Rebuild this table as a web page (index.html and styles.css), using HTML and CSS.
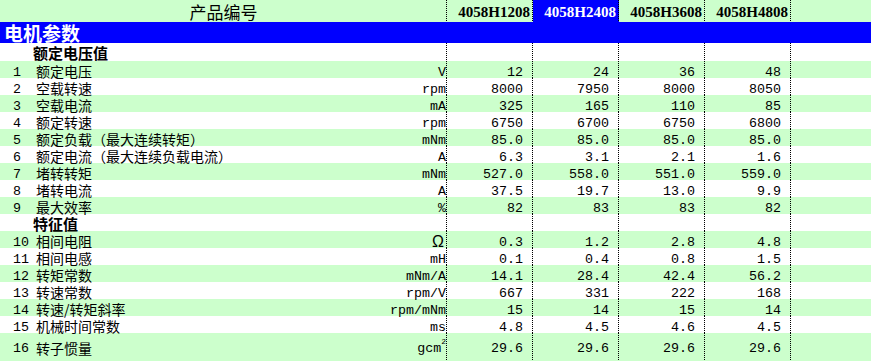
FILE: index.html
```html
<!DOCTYPE html>
<html lang="zh-CN">
<head>
<meta charset="utf-8">
<title>电机参数</title>
<link rel="stylesheet" href="styles.css">
</head>
<body>
<div class="sheet">
  <div class="row hdr">
    <div class="c title ln">产品编号</div>
    <div class="c model ln">4058H1208</div>
    <div class="c model sel ln">4058H2408</div>
    <div class="c model ln">4058H3608</div>
    <div class="c model ln">4058H4808</div>
    <div class="c"></div>
  </div>
  <div class="row sec"><div class="c sect">电机参数</div></div>
  <div class="row sub w">
    <div class="c"></div><div class="c head">额定电压值</div><div class="c ln"></div>
    <div class="c ln"></div><div class="c ln"></div><div class="c ln"></div><div class="c ln"></div><div class="c"></div>
  </div>
  <div class="row g">
    <div class="c num">1</div><div class="c name">额定电压</div><div class="c unit ln">V</div>
    <div class="c val ln">12</div><div class="c val ln">24</div><div class="c val ln">36</div><div class="c val ln">48</div><div class="c"></div>
  </div>
  <div class="row w">
    <div class="c num">2</div><div class="c name">空载转速</div><div class="c unit ln">rpm</div>
    <div class="c val ln">8000</div><div class="c val ln">7950</div><div class="c val ln">8000</div><div class="c val ln">8050</div><div class="c"></div>
  </div>
  <div class="row g">
    <div class="c num">3</div><div class="c name">空载电流</div><div class="c unit ln">mA</div>
    <div class="c val ln">325</div><div class="c val ln">165</div><div class="c val ln">110</div><div class="c val ln">85</div><div class="c"></div>
  </div>
  <div class="row w">
    <div class="c num">4</div><div class="c name">额定转速</div><div class="c unit ln">rpm</div>
    <div class="c val ln">6750</div><div class="c val ln">6700</div><div class="c val ln">6750</div><div class="c val ln">6800</div><div class="c"></div>
  </div>
  <div class="row g">
    <div class="c num">5</div><div class="c name">额定负载（最大连续转矩）</div><div class="c unit ln">mNm</div>
    <div class="c val ln">85.0</div><div class="c val ln">85.0</div><div class="c val ln">85.0</div><div class="c val ln">85.0</div><div class="c"></div>
  </div>
  <div class="row w">
    <div class="c num">6</div><div class="c name">额定电流（最大连续负载电流）</div><div class="c unit ln">A</div>
    <div class="c val ln">6.3</div><div class="c val ln">3.1</div><div class="c val ln">2.1</div><div class="c val ln">1.6</div><div class="c"></div>
  </div>
  <div class="row g">
    <div class="c num">7</div><div class="c name">堵转转矩</div><div class="c unit ln">mNm</div>
    <div class="c val ln">527.0</div><div class="c val ln">558.0</div><div class="c val ln">551.0</div><div class="c val ln">559.0</div><div class="c"></div>
  </div>
  <div class="row w">
    <div class="c num">8</div><div class="c name">堵转电流</div><div class="c unit ln">A</div>
    <div class="c val ln">37.5</div><div class="c val ln">19.7</div><div class="c val ln">13.0</div><div class="c val ln">9.9</div><div class="c"></div>
  </div>
  <div class="row g">
    <div class="c num">9</div><div class="c name">最大效率</div><div class="c unit ln">%</div>
    <div class="c val ln">82</div><div class="c val ln">83</div><div class="c val ln">83</div><div class="c val ln">82</div><div class="c"></div>
  </div>
  <div class="row w">
    <div class="c"></div><div class="c head">特征值</div><div class="c ln"></div>
    <div class="c ln"></div><div class="c ln"></div><div class="c ln"></div><div class="c ln"></div><div class="c"></div>
  </div>
  <div class="row g">
    <div class="c num">10</div><div class="c name">相间电阻</div><div class="c unit ohm ln">Ω</div>
    <div class="c val ln">0.3</div><div class="c val ln">1.2</div><div class="c val ln">2.8</div><div class="c val ln">4.8</div><div class="c"></div>
  </div>
  <div class="row w">
    <div class="c num">11</div><div class="c name">相间电感</div><div class="c unit ln">mH</div>
    <div class="c val ln">0.1</div><div class="c val ln">0.4</div><div class="c val ln">0.8</div><div class="c val ln">1.5</div><div class="c"></div>
  </div>
  <div class="row g">
    <div class="c num">12</div><div class="c name">转矩常数</div><div class="c unit ln">mNm/A</div>
    <div class="c val ln">14.1</div><div class="c val ln">28.4</div><div class="c val ln">42.4</div><div class="c val ln">56.2</div><div class="c"></div>
  </div>
  <div class="row w">
    <div class="c num">13</div><div class="c name">转速常数</div><div class="c unit ln">rpm/V</div>
    <div class="c val ln">667</div><div class="c val ln">331</div><div class="c val ln">222</div><div class="c val ln">168</div><div class="c"></div>
  </div>
  <div class="row g">
    <div class="c num">14</div><div class="c name">转速/转矩斜率</div><div class="c unit ln">rpm/mNm</div>
    <div class="c val ln">15</div><div class="c val ln">14</div><div class="c val ln">15</div><div class="c val ln">14</div><div class="c"></div>
  </div>
  <div class="row w">
    <div class="c num">15</div><div class="c name">机械时间常数</div><div class="c unit ln">ms</div>
    <div class="c val ln">4.8</div><div class="c val ln">4.5</div><div class="c val ln">4.6</div><div class="c val ln">4.5</div><div class="c"></div>
  </div>
  <div class="row tall g">
    <div class="c num">16</div><div class="c name">转子惯量</div><div class="c unit ln"><span>gcm<sup class="sq">2</sup></span></div>
    <div class="c val ln">29.6</div><div class="c val ln">29.6</div><div class="c val ln">29.6</div><div class="c val ln">29.6</div><div class="c"></div>
  </div>
</div>
</body>
</html>
```

FILE: styles.css
```css
html, body {
  margin: 0;
  padding: 0;
  background: #ffffff;
}

.sheet {
  width: 871px;
  color: #000;
}

.row {
  display: grid;
  grid-template-columns: 33px 330px 84px repeat(4, 86px) 1fr;
  grid-template-rows: 17px;
  height: 17px;
}

.row.hdr {
  grid-template-rows: 22px;
  height: 22px;
  background: #ccffcc;
}

.row.sec {
  grid-template-rows: 21px;
  height: 21px;
  background: #0000ff;
}

.row.sub {
  grid-template-rows: 18px;
  height: 18px;
}

.row.tall {
  grid-template-rows: 28px;
  height: 28px;
}

.g { background: #ccffcc; }
.w { background: #ffffff; }

.c {
  box-sizing: border-box;
  display: flex;
  align-items: center;
  min-width: 0;
  white-space: nowrap;
  line-height: 1;
}

.ln {
  background-image: repeating-linear-gradient(to bottom, #000 0, #000 1px, transparent 1px, transparent 2px);
  background-size: 1px 100%;
  background-position: right top;
  background-repeat: no-repeat;
}

.title {
  grid-column: 1 / 4;
  justify-content: center;
  font-family: "Noto Sans CJK SC", sans-serif;
  font-size: 17px;
  padding-top: 1px;
}

.model {
  justify-content: flex-end;
  padding-right: 3px;
  padding-top: 2px;
  font-family: "Liberation Serif", serif;
  font-weight: bold;
  font-size: 15px;
}

.model.sel {
  background-color: #0000ff;
  color: #ffffff;
}

.sect {
  grid-column: 1 / -1;
  padding-left: 4px;
  color: #ffffff;
  font-family: "Noto Sans CJK SC", sans-serif;
  font-weight: bold;
  font-size: 19px;
}

.head {
  padding-left: 0;
  padding-top: 1px;
  font-family: "Noto Sans CJK SC", sans-serif;
  font-weight: bold;
  font-size: 15px;
}

.num {
  padding-left: 13px;
  padding-top: 7px;
  font-family: "Liberation Mono", monospace;
  font-size: 13.33px;
}

.name {
  padding-left: 3px;
  padding-top: 2px;
  font-family: "Noto Sans CJK SC", sans-serif;
  font-size: 14px;
}

.unit {
  justify-content: flex-end;
  padding-right: 1px;
  padding-top: 7px;
  font-family: "Liberation Mono", monospace;
  font-size: 13.33px;
}

.unit.ohm {
  font-family: "Liberation Sans", sans-serif;
  font-size: 16px;
  padding-top: 4px;
  padding-right: 3px;
}

.sq {
  font-size: 8px;
  line-height: 0;
  vertical-align: 8px;
}

.val {
  justify-content: flex-end;
  padding-right: 10px;
  padding-top: 7px;
  font-family: "Liberation Mono", monospace;
  font-size: 13.33px;
}

.tall .num,
.tall .unit,
.tall .val {
  padding-top: 4px;
}

.tall .name {
  padding-top: 1px;
}
```
